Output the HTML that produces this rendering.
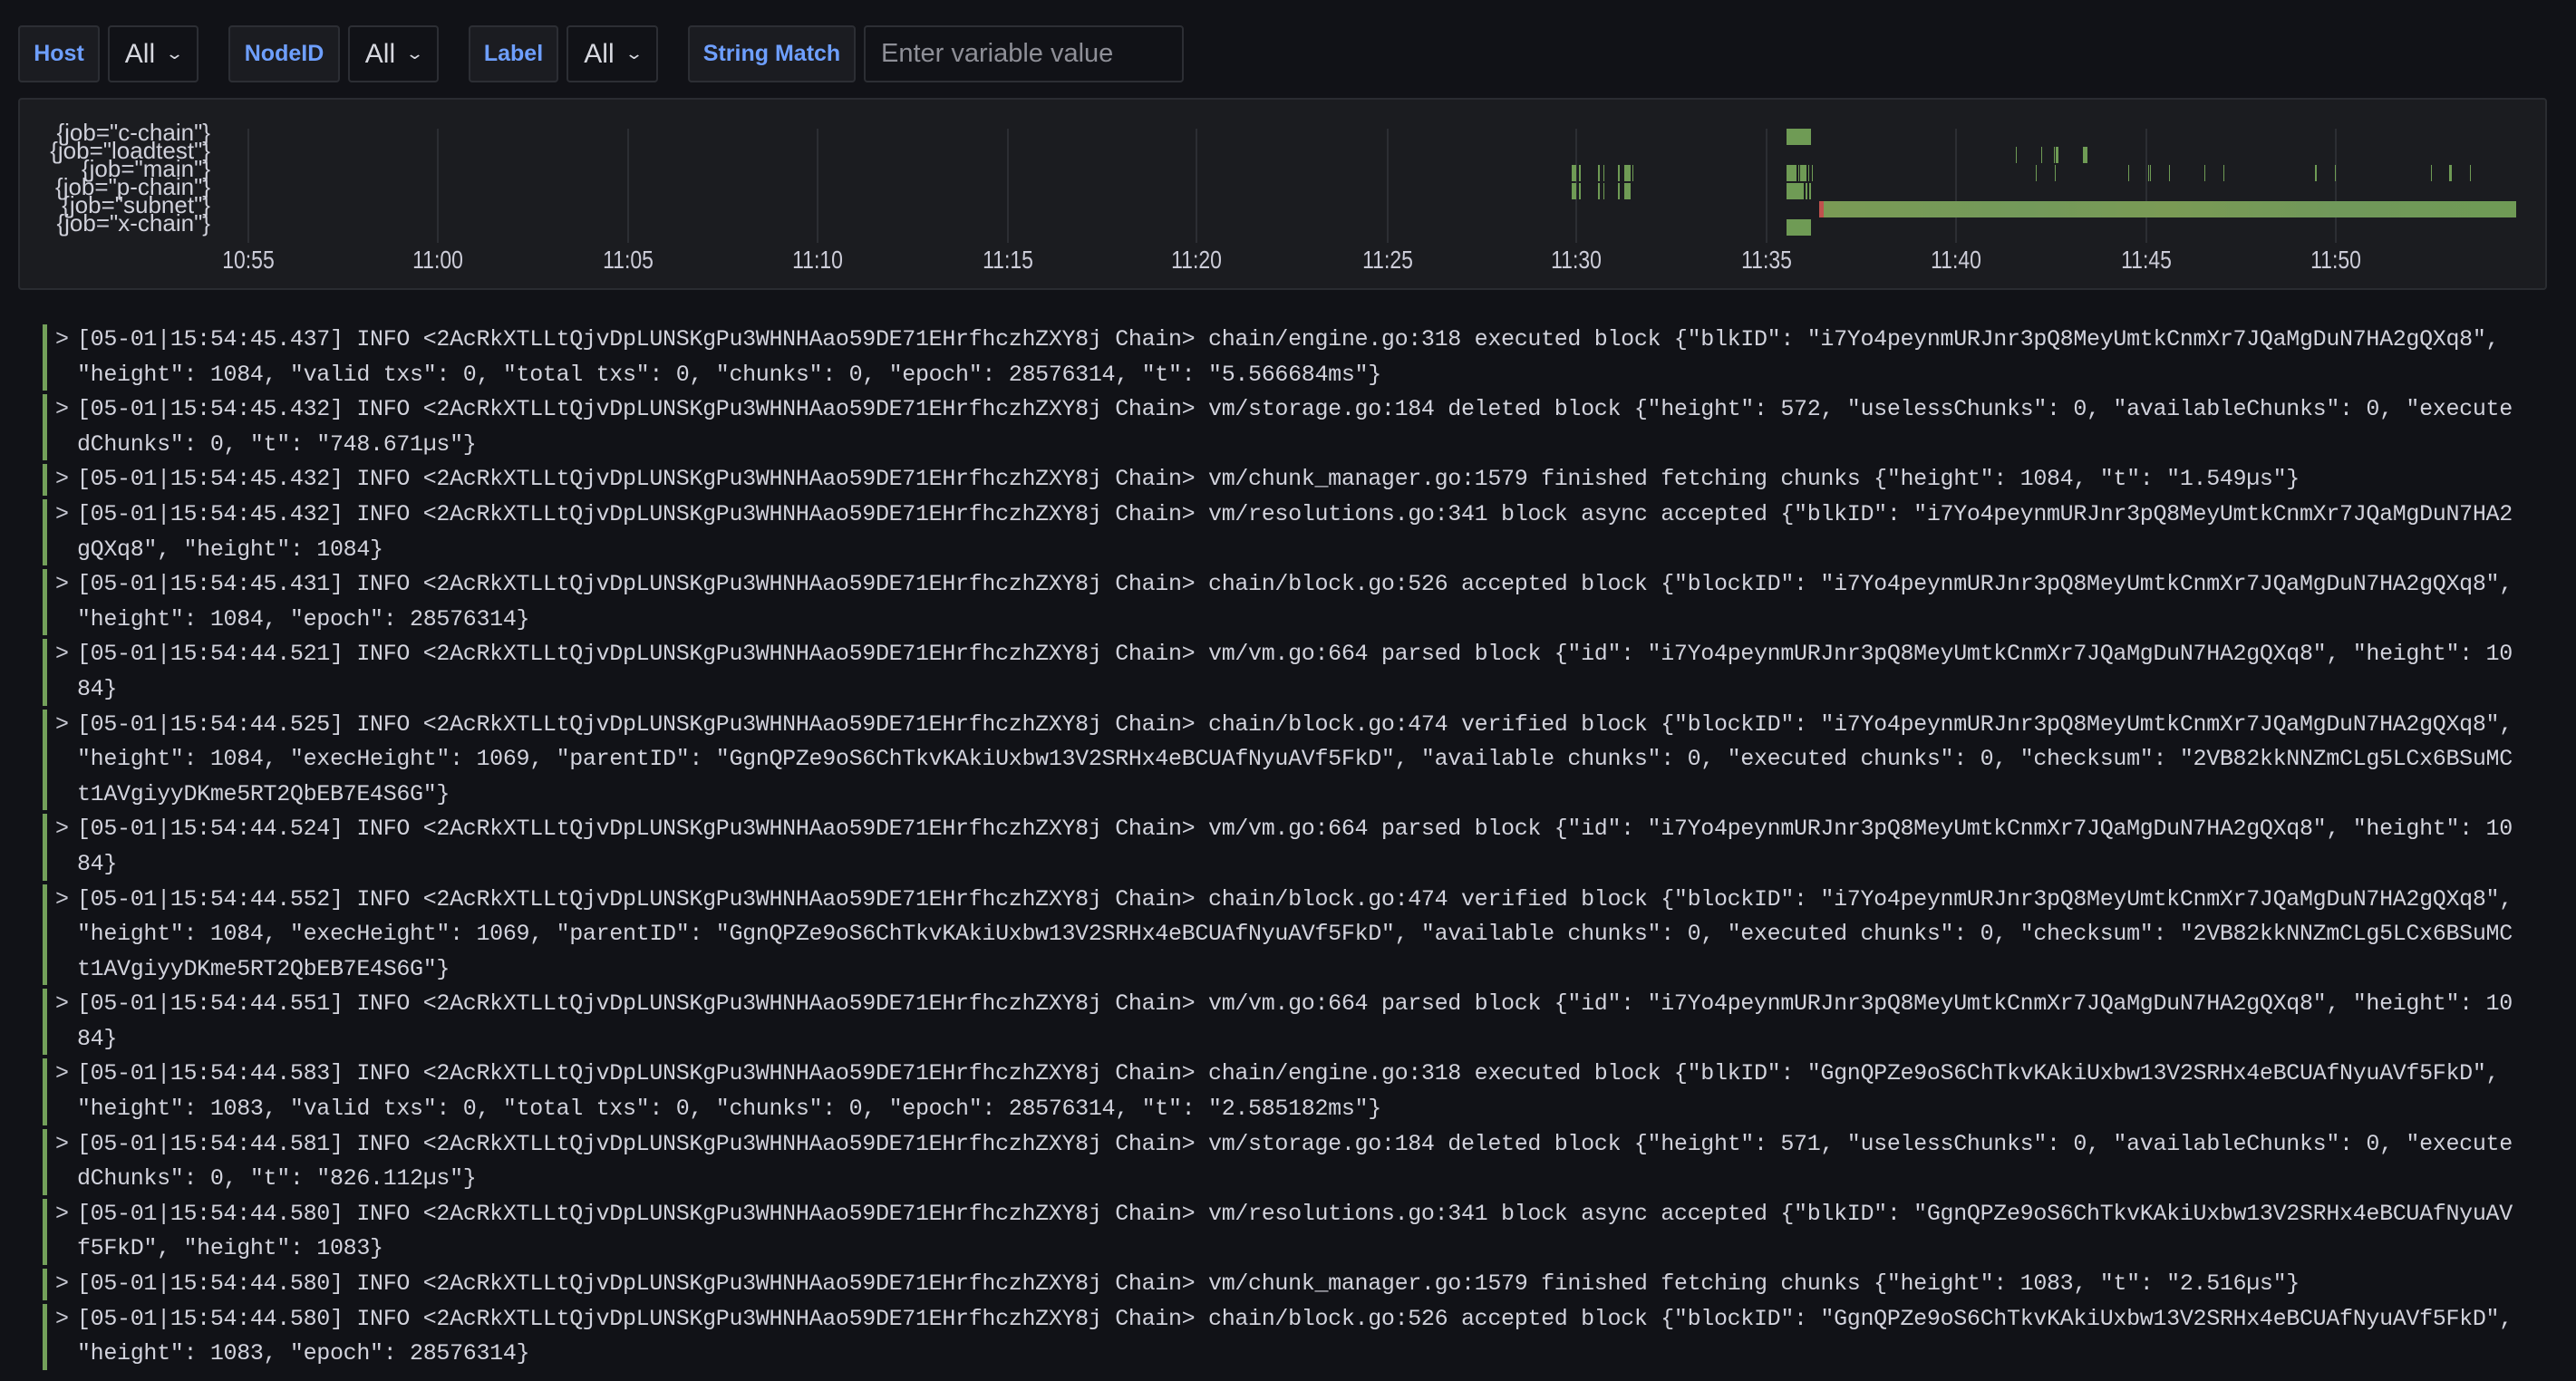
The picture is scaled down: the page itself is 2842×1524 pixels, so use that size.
<!DOCTYPE html>
<html><head><meta charset="utf-8"><style>
*{margin:0;padding:0;box-sizing:border-box}
body{width:2842px;height:1524px;background:#111217;overflow:hidden;position:relative;font-family:"Liberation Sans",sans-serif}
.b{position:absolute;top:28px;height:63px;border:2px solid #2c2e34;border-radius:4px;display:flex;align-items:center;justify-content:center;font-size:25px}
.lb{background:#1b1c21;color:#6e9fff;font-weight:bold;font-size:25px}
.sel{background:#111217;color:#d8d9e0;font-size:30px}
.sel span{font-size:18px;margin-left:14px;transform:scaleX(1.4)}
.panel{position:absolute;left:20px;top:108px;width:2790px;height:212px;background:#1b1c20;border:2px solid #2a2c31;border-radius:4px}
.g{position:absolute;top:142px;height:126px;width:2px;background:#2c2e33}
.t{position:absolute;top:271px;width:100px;margin-left:-50px;text-align:center;color:#ccccd8;font-size:28px;transform:scaleX(.82)}
.leg{position:absolute;left:0;width:232px;top:136px;text-align:right;color:#d0d1db;font-size:26px;line-height:20px;transform-origin:right;transform:scaleX(1.0)}
.k{position:absolute;background:#6f9b55;height:18px}
.logs{position:absolute;left:47px;top:356px;font-family:"Liberation Mono",monospace;font-size:25px;letter-spacing:-.32px;color:#d2d3dd;line-height:38.6px}
.e{position:relative;padding-left:38px;white-space:pre}
.e:before{content:"";position:absolute;left:0;top:2px;bottom:2px;width:5px;background:#73a05a}
.e i{font-style:normal;position:absolute;left:14px;top:0;color:#c8c9d3}
</style></head><body>
<div class="b lb" style="left:20px;width:90px">Host</div>
<div class="b sel" style="left:119px;width:100px">All<span>⌄</span></div>
<div class="b lb" style="left:252px;width:123px">NodeID</div>
<div class="b sel" style="left:384px;width:100px">All<span>⌄</span></div>
<div class="b lb" style="left:517px;width:99px">Label</div>
<div class="b sel" style="left:625px;width:101px">All<span>⌄</span></div>
<div class="b lb" style="left:759px;width:185px">String Match</div>
<div class="b sel" style="left:953px;width:353px;justify-content:flex-start;padding-left:17px;color:#8e8f97;font-size:29px">Enter variable value</div>
<div class="panel"></div>
<div class="leg">{job="c-chain"}<br>{job="loadtest"}<br>{job="main"}<br>{job="p-chain"}<br>{job="subnet"}<br>{job="x-chain"}</div>
<div class="g" style="left:273px"></div><div class="g" style="left:482px"></div><div class="g" style="left:692px"></div><div class="g" style="left:901px"></div><div class="g" style="left:1111px"></div><div class="g" style="left:1319px"></div><div class="g" style="left:1530px"></div><div class="g" style="left:1738px"></div><div class="g" style="left:1948px"></div><div class="g" style="left:2157px"></div><div class="g" style="left:2367px"></div><div class="g" style="left:2576px"></div>
<div class="t" style="left:274px">10:55</div><div class="t" style="left:483px">11:00</div><div class="t" style="left:693px">11:05</div><div class="t" style="left:902px">11:10</div><div class="t" style="left:1112px">11:15</div><div class="t" style="left:1320px">11:20</div><div class="t" style="left:1531px">11:25</div><div class="t" style="left:1739px">11:30</div><div class="t" style="left:1949px">11:35</div><div class="t" style="left:2158px">11:40</div><div class="t" style="left:2368px">11:45</div><div class="t" style="left:2577px">11:50</div>
<div class="k" style="top:142px;left:1971px;width:27px"></div>
<div class="k" style="top:162px;left:2224px;width:1px"></div><div class="k" style="top:162px;left:2252px;width:1px"></div><div class="k" style="top:162px;left:2266px;width:1px"></div><div class="k" style="top:162px;left:2268px;width:3px"></div><div class="k" style="top:162px;left:2298px;width:5px"></div>
<div class="k" style="top:182px;left:1734px;width:5px"></div><div class="k" style="top:182px;left:1742px;width:2px"></div><div class="k" style="top:182px;left:1763px;width:2px"></div><div class="k" style="top:182px;left:1769px;width:1px"></div><div class="k" style="top:182px;left:1785px;width:2px"></div><div class="k" style="top:182px;left:1792px;width:7px"></div><div class="k" style="top:182px;left:1801px;width:1px"></div>
<div class="k" style="top:182px;left:1971px;width:11px"></div><div class="k" style="top:182px;left:1984px;width:1px"></div><div class="k" style="top:182px;left:1986px;width:7px"></div><div class="k" style="top:182px;left:1995px;width:1px"></div><div class="k" style="top:182px;left:1999px;width:1px"></div>
<div class="k" style="top:182px;left:2246px;width:1px"></div><div class="k" style="top:182px;left:2267px;width:1px"></div><div class="k" style="top:182px;left:2348px;width:1px"></div><div class="k" style="top:182px;left:2370px;width:1px"></div><div class="k" style="top:182px;left:2372px;width:1px"></div><div class="k" style="top:182px;left:2393px;width:1px"></div><div class="k" style="top:182px;left:2432px;width:1px"></div><div class="k" style="top:182px;left:2453px;width:1px"></div><div class="k" style="top:182px;left:2554px;width:2px"></div><div class="k" style="top:182px;left:2576px;width:1px"></div><div class="k" style="top:182px;left:2682px;width:1px"></div><div class="k" style="top:182px;left:2702px;width:3px"></div><div class="k" style="top:182px;left:2725px;width:1px"></div>
<div class="k" style="top:202px;left:1734px;width:5px"></div><div class="k" style="top:202px;left:1742px;width:2px"></div><div class="k" style="top:202px;left:1763px;width:2px"></div><div class="k" style="top:202px;left:1769px;width:1px"></div><div class="k" style="top:202px;left:1785px;width:2px"></div><div class="k" style="top:202px;left:1792px;width:7px"></div>
<div class="k" style="top:202px;left:1971px;width:19px"></div><div class="k" style="top:202px;left:1992px;width:2px"></div><div class="k" style="top:202px;left:1996px;width:2px"></div>
<div class="k" style="top:222px;left:2007px;width:769px;background:linear-gradient(90deg,#c0504d 0,#c0504d 5px,#7a9a55 5px,#73995a 30%,#7a9a55 50%,#70985a 75%,#6f9a55 100%)"></div>
<div class="k" style="top:242px;left:1971px;width:27px"></div>
<div class="logs"><div class="e"><i>&gt;</i>[05-01|15:54:45.437] INFO &lt;2AcRkXTLLtQjvDpLUNSKgPu3WHNHAao59DE71EHrfhczhZXY8j Chain&gt; chain/engine.go:318 executed block {"blkID": "i7Yo4peynmURJnr3pQ8MeyUmtkCnmXr7JQaMgDuN7HA2gQXq8",
"height": 1084, "valid txs": 0, "total txs": 0, "chunks": 0, "epoch": 28576314, "t": "5.566684ms"}</div><div class="e"><i>&gt;</i>[05-01|15:54:45.432] INFO &lt;2AcRkXTLLtQjvDpLUNSKgPu3WHNHAao59DE71EHrfhczhZXY8j Chain&gt; vm/storage.go:184 deleted block {"height": 572, "uselessChunks": 0, "availableChunks": 0, "execute
dChunks": 0, "t": "748.671µs"}</div><div class="e"><i>&gt;</i>[05-01|15:54:45.432] INFO &lt;2AcRkXTLLtQjvDpLUNSKgPu3WHNHAao59DE71EHrfhczhZXY8j Chain&gt; vm/chunk_manager.go:1579 finished fetching chunks {"height": 1084, "t": "1.549µs"}</div><div class="e"><i>&gt;</i>[05-01|15:54:45.432] INFO &lt;2AcRkXTLLtQjvDpLUNSKgPu3WHNHAao59DE71EHrfhczhZXY8j Chain&gt; vm/resolutions.go:341 block async accepted {"blkID": "i7Yo4peynmURJnr3pQ8MeyUmtkCnmXr7JQaMgDuN7HA2
gQXq8", "height": 1084}</div><div class="e"><i>&gt;</i>[05-01|15:54:45.431] INFO &lt;2AcRkXTLLtQjvDpLUNSKgPu3WHNHAao59DE71EHrfhczhZXY8j Chain&gt; chain/block.go:526 accepted block {"blockID": "i7Yo4peynmURJnr3pQ8MeyUmtkCnmXr7JQaMgDuN7HA2gQXq8",
"height": 1084, "epoch": 28576314}</div><div class="e"><i>&gt;</i>[05-01|15:54:44.521] INFO &lt;2AcRkXTLLtQjvDpLUNSKgPu3WHNHAao59DE71EHrfhczhZXY8j Chain&gt; vm/vm.go:664 parsed block {"id": "i7Yo4peynmURJnr3pQ8MeyUmtkCnmXr7JQaMgDuN7HA2gQXq8", "height": 10
84}</div><div class="e"><i>&gt;</i>[05-01|15:54:44.525] INFO &lt;2AcRkXTLLtQjvDpLUNSKgPu3WHNHAao59DE71EHrfhczhZXY8j Chain&gt; chain/block.go:474 verified block {"blockID": "i7Yo4peynmURJnr3pQ8MeyUmtkCnmXr7JQaMgDuN7HA2gQXq8",
"height": 1084, "execHeight": 1069, "parentID": "GgnQPZe9oS6ChTkvKAkiUxbw13V2SRHx4eBCUAfNyuAVf5FkD", "available chunks": 0, "executed chunks": 0, "checksum": "2VB82kkNNZmCLg5LCx6BSuMC
t1AVgiyyDKme5RT2QbEB7E4S6G"}</div><div class="e"><i>&gt;</i>[05-01|15:54:44.524] INFO &lt;2AcRkXTLLtQjvDpLUNSKgPu3WHNHAao59DE71EHrfhczhZXY8j Chain&gt; vm/vm.go:664 parsed block {"id": "i7Yo4peynmURJnr3pQ8MeyUmtkCnmXr7JQaMgDuN7HA2gQXq8", "height": 10
84}</div><div class="e"><i>&gt;</i>[05-01|15:54:44.552] INFO &lt;2AcRkXTLLtQjvDpLUNSKgPu3WHNHAao59DE71EHrfhczhZXY8j Chain&gt; chain/block.go:474 verified block {"blockID": "i7Yo4peynmURJnr3pQ8MeyUmtkCnmXr7JQaMgDuN7HA2gQXq8",
"height": 1084, "execHeight": 1069, "parentID": "GgnQPZe9oS6ChTkvKAkiUxbw13V2SRHx4eBCUAfNyuAVf5FkD", "available chunks": 0, "executed chunks": 0, "checksum": "2VB82kkNNZmCLg5LCx6BSuMC
t1AVgiyyDKme5RT2QbEB7E4S6G"}</div><div class="e"><i>&gt;</i>[05-01|15:54:44.551] INFO &lt;2AcRkXTLLtQjvDpLUNSKgPu3WHNHAao59DE71EHrfhczhZXY8j Chain&gt; vm/vm.go:664 parsed block {"id": "i7Yo4peynmURJnr3pQ8MeyUmtkCnmXr7JQaMgDuN7HA2gQXq8", "height": 10
84}</div><div class="e"><i>&gt;</i>[05-01|15:54:44.583] INFO &lt;2AcRkXTLLtQjvDpLUNSKgPu3WHNHAao59DE71EHrfhczhZXY8j Chain&gt; chain/engine.go:318 executed block {"blkID": "GgnQPZe9oS6ChTkvKAkiUxbw13V2SRHx4eBCUAfNyuAVf5FkD",
"height": 1083, "valid txs": 0, "total txs": 0, "chunks": 0, "epoch": 28576314, "t": "2.585182ms"}</div><div class="e"><i>&gt;</i>[05-01|15:54:44.581] INFO &lt;2AcRkXTLLtQjvDpLUNSKgPu3WHNHAao59DE71EHrfhczhZXY8j Chain&gt; vm/storage.go:184 deleted block {"height": 571, "uselessChunks": 0, "availableChunks": 0, "execute
dChunks": 0, "t": "826.112µs"}</div><div class="e"><i>&gt;</i>[05-01|15:54:44.580] INFO &lt;2AcRkXTLLtQjvDpLUNSKgPu3WHNHAao59DE71EHrfhczhZXY8j Chain&gt; vm/resolutions.go:341 block async accepted {"blkID": "GgnQPZe9oS6ChTkvKAkiUxbw13V2SRHx4eBCUAfNyuAV
f5FkD", "height": 1083}</div><div class="e"><i>&gt;</i>[05-01|15:54:44.580] INFO &lt;2AcRkXTLLtQjvDpLUNSKgPu3WHNHAao59DE71EHrfhczhZXY8j Chain&gt; vm/chunk_manager.go:1579 finished fetching chunks {"height": 1083, "t": "2.516µs"}</div><div class="e"><i>&gt;</i>[05-01|15:54:44.580] INFO &lt;2AcRkXTLLtQjvDpLUNSKgPu3WHNHAao59DE71EHrfhczhZXY8j Chain&gt; chain/block.go:526 accepted block {"blockID": "GgnQPZe9oS6ChTkvKAkiUxbw13V2SRHx4eBCUAfNyuAVf5FkD",
"height": 1083, "epoch": 28576314}</div></div>
</body></html>
